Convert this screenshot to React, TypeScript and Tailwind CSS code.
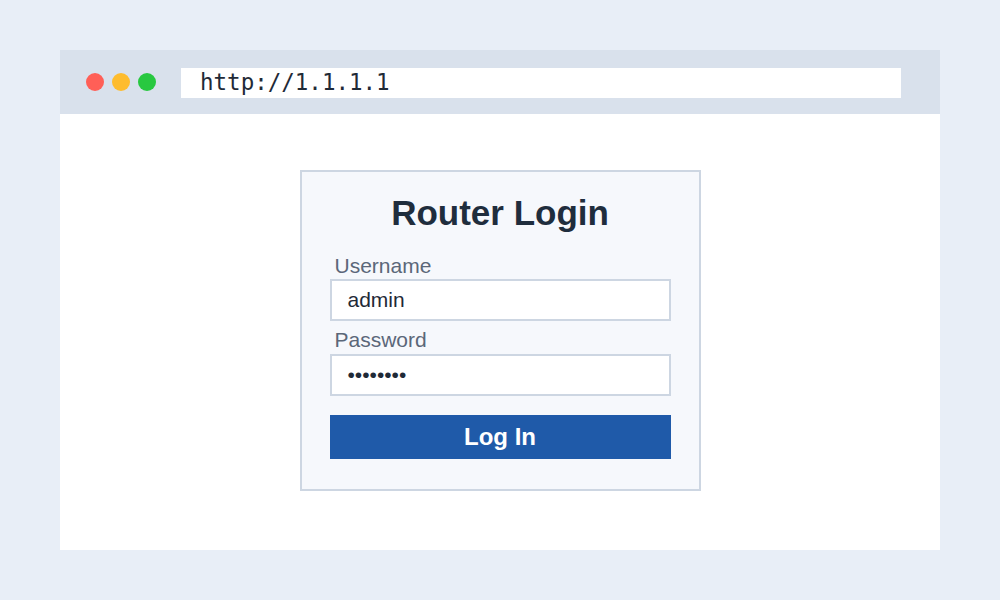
import React from "react";

export default function App() {
  return (
    <div className="w-[1000px] h-[600px] bg-[#e8eef7] pt-[50px] pl-[60px]" style={{ fontFamily: '"Liberation Sans", Arial, sans-serif' }}>
      <div className="w-[880px] h-[500px] bg-white flex flex-col">
        <div className="h-[64px] bg-[#d9e1ec] flex items-start pt-[18px] pl-[26px]">
          <div className="flex gap-[8px] mt-[5px]">
            <div className="w-[18px] h-[18px] rounded-full bg-[#ff5f57]" />
            <div className="w-[18px] h-[18px] rounded-full bg-[#febc2e]" />
            <div className="w-[18px] h-[18px] rounded-full bg-[#28c840]" />
          </div>
          <div
            className="ml-[25px] w-[720px] h-[30px] bg-white pl-[19px] text-[22.5px] leading-[28px] text-[#1f2a37]"
            style={{ fontFamily: '"DejaVu Sans Mono", monospace' }}
          >
            http://1.1.1.1
          </div>
        </div>
        <div className="flex-1 pt-[56px]">
          <div className="mx-auto w-[401px] h-[321px] border-2 border-[#cdd6e2] bg-[#f6f8fc] px-[28px] pt-[21px] flex flex-col">
            <h1 className="text-center text-[35px] leading-[40px] font-bold text-[#1f2d3d]">Router Login</h1>
            <label className="mt-[21px] pl-[5px] text-[21px] leading-[24px] text-[#5b6779]">Username</label>
            <div className="mt-[1px] h-[42px] border-2 border-[#cdd6e2] bg-white flex items-center pl-[16px] text-[21px] leading-[24px] text-[#1f2a37]">
              admin
            </div>
            <label className="mt-[7px] pl-[5px] text-[21px] leading-[24px] text-[#5b6779]">Password</label>
            <div className="mt-[2px] h-[42px] border-2 border-[#cdd6e2] bg-white flex items-center pl-[16px] text-[21px] leading-[24px] text-[#1f2a37]">
              ••••••••
            </div>
            <button className="mt-[19px] h-[44px] bg-[#1f5aa9] text-white font-bold text-[24px] leading-[28px] flex items-center justify-center">
              Log In
            </button>
          </div>
        </div>
      </div>
    </div>
  );
}
